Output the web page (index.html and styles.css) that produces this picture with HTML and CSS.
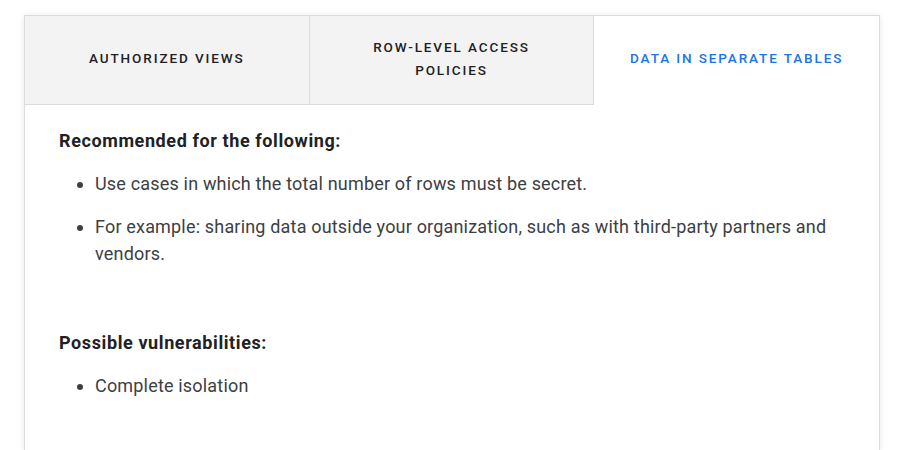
FILE: index.html
```html
<!DOCTYPE html>
<html lang="en">
<head>
<meta charset="utf-8">
<link rel="stylesheet" href="styles.css">
</head>
<body>
<div class="card">
  <div class="tabs">
    <div class="tab">Authorized views</div>
    <div class="tab">Row-level access policies</div>
    <div class="tab active">Data in separate tables</div>
  </div>
  <div class="panel">
    <p class="heading">Recommended for the following:</p>
    <ul>
      <li>Use cases in which the total number of rows must be secret.</li>
      <li>For example: sharing data outside your organization, such as with third-party partners and vendors.</li>
    </ul>
    <p class="heading second">Possible vulnerabilities:</p>
    <ul>
      <li>Complete isolation</li>
    </ul>
  </div>
</div>
</body>
</html>
```

FILE: styles.css
```css
html, body {
  margin: 0;
  padding: 0;
  background: #ffffff;
  overflow: hidden;
}
body {
  padding: 15px 22px 0 24px;
  font-family: Roboto, "Noto Sans", sans-serif;
  color: #3c4043;
}
.card {
  border: 1px solid #dadce0;
  border-bottom: none;
  background: #fff;
  box-shadow: 0 1px 6px rgba(60, 64, 67, 0.12);
  height: 434px;
}
.tabs {
  display: grid;
  grid-template-columns: 1fr 1fr 1fr;
  height: 89px;
}
.tab {
  display: flex;
  align-items: center;
  justify-content: center;
  text-align: center;
  padding: 0 30px 3px;
  background: #f3f3f3;
  border-bottom: 1px solid #dadce0;
  border-right: 1px solid #dadce0;
  text-transform: uppercase;
  font-size: 13.5px;
  font-weight: 500;
  letter-spacing: 1.9px;
  line-height: 23px;
  color: #202124;
}
.tab.active {
  background: #fff;
  border-bottom-color: transparent;
  border-right: none;
  color: #1a73e8;
}
.panel {
  padding: 22px 34px 0 34px;
  font-size: 18px;
  line-height: 27px;
}
.panel li {
  letter-spacing: 0.18px;
}
.heading {
  margin: 0;
  font-weight: 700;
  letter-spacing: 0.6px;
  color: #202124;
}
.heading.second {
  margin-top: 62px;
}
ul {
  margin: 16px 0 0 0;
  padding-left: 36px;
}
li {
  margin-bottom: 16px;
}
```
